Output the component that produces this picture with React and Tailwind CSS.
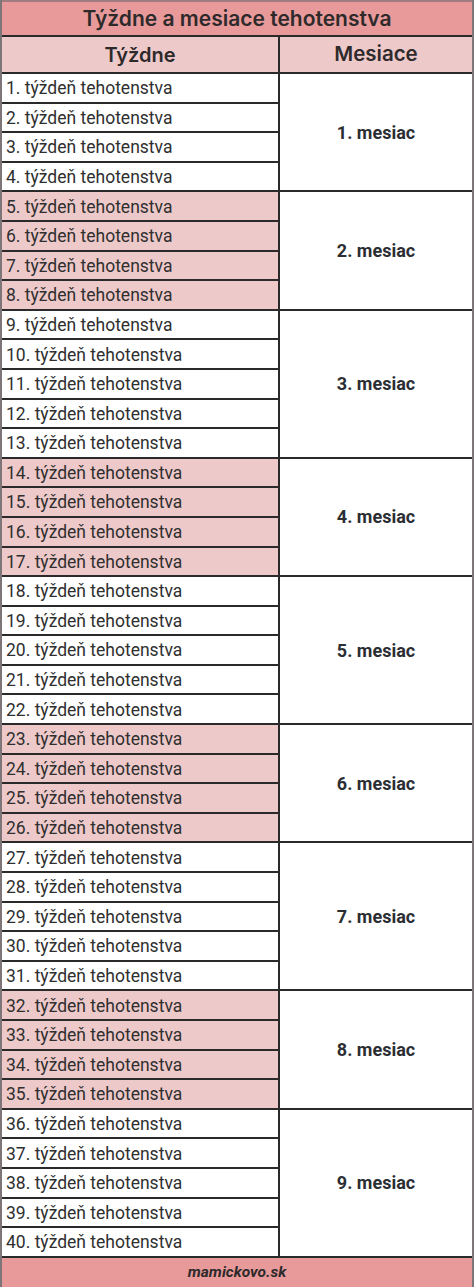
import React from "react";

const groups = [
  { weeks: [1, 2, 3, 4], month: "1. mesiac", pink: false },
  { weeks: [5, 6, 7, 8], month: "2. mesiac", pink: true },
  { weeks: [9, 10, 11, 12, 13], month: "3. mesiac", pink: false },
  { weeks: [14, 15, 16, 17], month: "4. mesiac", pink: true },
  { weeks: [18, 19, 20, 21, 22], month: "5. mesiac", pink: false },
  { weeks: [23, 24, 25, 26], month: "6. mesiac", pink: true },
  { weeks: [27, 28, 29, 30, 31], month: "7. mesiac", pink: false },
  { weeks: [32, 33, 34, 35], month: "8. mesiac", pink: true },
  { weeks: [36, 37, 38, 39, 40], month: "9. mesiac", pink: false },
];

export default function App() {
  return (
    <div
      className="w-[474px] h-[1287px] bg-white text-[#2f2f2f] flex flex-col border-l-2 border-r-2 border-[#7d7577]"
      style={{ fontFamily: "Roboto, 'Liberation Sans', sans-serif" }}
    >
      <div
        className="shrink-0 h-[37px] flex items-center justify-center bg-[#e89a9a] border-t-2 border-t-[#a07c80] border-b-2 border-b-[#2a2a2a] text-[21px] font-semibold text-[#2e2a2b]"
        style={{ fontFamily: "Inter, 'Noto Sans', sans-serif" }}
      >
        Týždne a mesiace tehotenstva
      </div>
      <div
        className="shrink-0 h-[37px] flex bg-[#eec9c9] border-b-2 border-[#2a2a2a] text-[20px] font-semibold text-[#2e2a2b]"
        style={{ fontFamily: "Inter, 'Noto Sans', sans-serif" }}
      >
        <div className="w-[278px] flex items-center justify-center border-r-2 border-[#2a2a2a]">
          Týždne
        </div>
        <div className="flex-1 flex items-center justify-center text-[20.5px]">Mesiace</div>
      </div>
      {groups.map((g) => (
        <div key={g.month} className="shrink-0 flex">
          <div className="w-[278px] flex flex-col border-r-2 border-[#2a2a2a]">
            {g.weeks.map((w) => (
              <div
                key={w}
                className={
                  "shrink-0 h-[29.6px] flex items-center pl-1 pt-[1px] text-[17.5px] border-b-2 border-[#2a2a2a] " +
                  (g.pink ? "bg-[#eec9c9]" : "bg-white")
                }
              >
                {w}. týždeň tehotenstva
              </div>
            ))}
          </div>
          <div className="flex-1 flex items-center justify-center font-bold text-[18px] text-[#2b2e33] border-b-2 border-[#2a2a2a]">
            {g.month}
          </div>
        </div>
      ))}
      <div className="flex-1 flex items-center justify-center bg-[#e89a9a] text-[15.5px] font-bold italic text-[#2e2a2b]">
        mamickovo.sk
      </div>
    </div>
  );
}
